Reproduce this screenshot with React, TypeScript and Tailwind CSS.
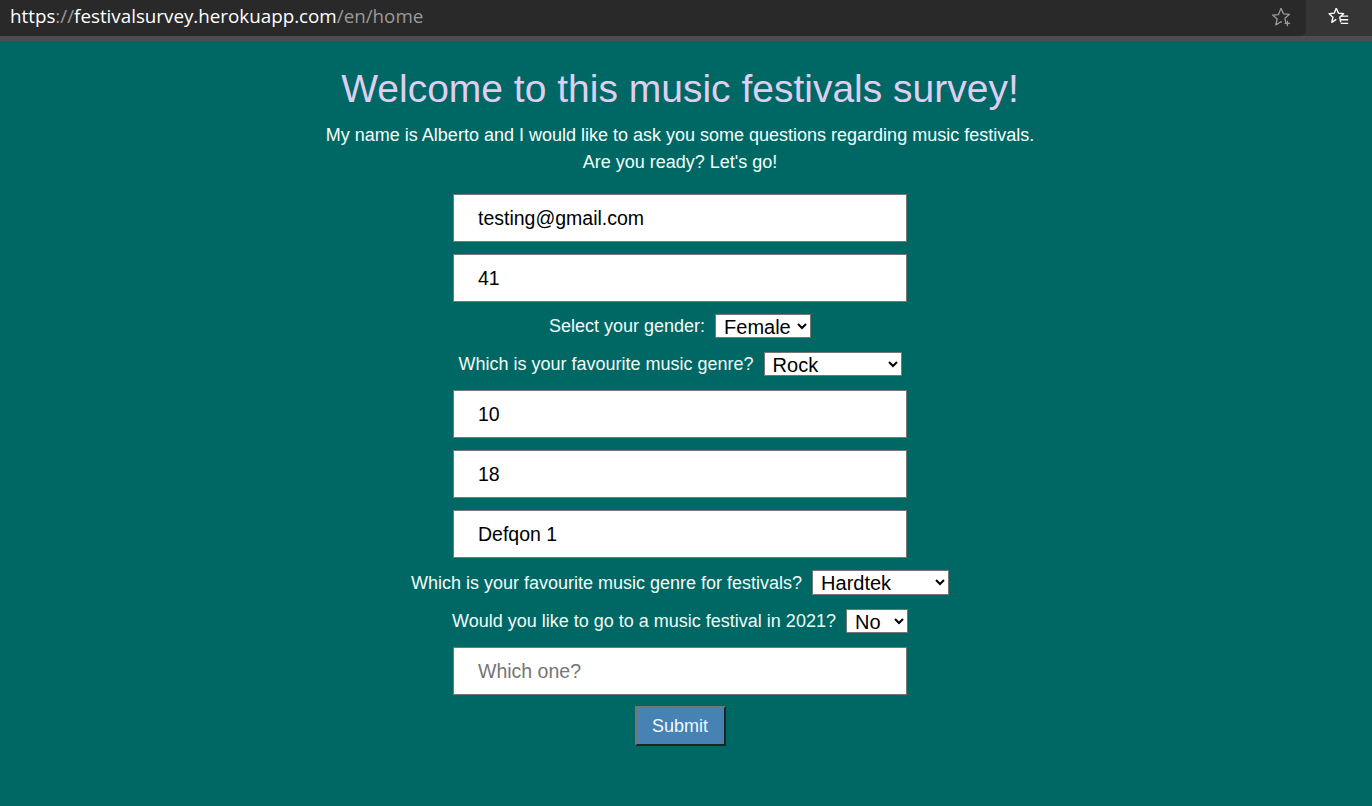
import React from "react";

const field =
  "w-[454px] h-[48px] bg-white border border-[#767676] pl-6 text-[19.5px] text-black outline-none placeholder:text-[#757575]";
const sel =
  "h-[24px] bg-white border border-[#767676] text-[20px] leading-none text-black pl-[4px] outline-none";

function BrowserBar() {
  return (
    <div className="flex h-[41px] bg-[#353535] border-b-[5px] border-[#4d4d4d]" style={{ fontFamily: '"Open Sans", "Noto Sans", sans-serif' }}>
      <div className="flex items-center flex-1 bg-[#292929] rounded-br-[6px] pl-[10px] pr-[14px]">
        <div className="flex-1 text-[18.8px] leading-none -mt-[3px]">
          <span className="text-white">https</span>
          <span className="text-[#9a9a9a]">://</span>
          <span className="text-white">festivalsurvey.herokuapp.com</span>
          <span className="text-[#9a9a9a]">/en/home</span>
        </div>
        {/* star with plus */}
        <svg width="22" height="22" viewBox="0 0 24 24" fill="none" stroke="#9a9a9a" strokeWidth="1.4" className="-mt-[3px]">
          <path d="M12 2.5l2.7 6 6.5.6-4.9 4.3 1.2 6.3" strokeLinejoin="round" />
          <path d="M13 17.8L12 17.2l-5.7 3.4 1.5-6.4L2.8 9.9l6.5-.6L12 2.5" strokeLinejoin="round" />
          <path d="M19 16v6M16 19h6" />
        </svg>
      </div>
      <div className="w-[66px] flex items-center justify-center">
        <svg width="22" height="22" viewBox="0 0 24 24" fill="none" stroke="#ffffff" strokeWidth="1.5" className="-mt-[3px]">
          <path d="M9 2.5l2.4 5.3 5.6.6-4.2 3.8 1.1 5.6" strokeLinejoin="round" />
          <path d="M9 14.6l-4.9 3.2 1.3-5.6L1.2 8.4l5.6-.6L9 2.5" strokeLinejoin="round" />
          <path d="M14 11h8M14 15h8M14 19h8" />
        </svg>
      </div>
    </div>
  );
}

function Row({ label, children }: { label: string; children: React.ReactNode }) {
  return (
    <div className="flex items-center justify-center gap-[10px]">
      <span className="text-[18px] leading-[24px] text-[#f2fbf8]">{label}</span>
      {children}
    </div>
  );
}

export default function App() {
  return (
    <div className="min-h-[806px] bg-[#006864]" style={{ fontFamily: '"Liberation Sans", Arial, sans-serif' }}>
      <BrowserBar />
      <main className="w-[1360px] flex flex-col items-center">
        <h1 className="mt-[26px] text-[39px] leading-[44px] text-[#decff0]">
          Welcome to this music festivals survey!
        </h1>
        <p className="mt-[11px] text-[18px] leading-[27px] text-[#f4fffc] text-center">
          My name is Alberto and I would like to ask you some questions regarding music festivals.
          <br />
          Are you ready? Let's go!
        </p>

        <form className="mt-[18px] flex flex-col items-center">
          <input className={field} defaultValue="testing@gmail.com" />
          <input className={`${field} mt-[12px]`} defaultValue="41" />

          <div className="mt-[12px]">
            <Row label="Select your gender:">
              <select className={`${sel} w-[96px]`} defaultValue="Female">
                <option>Male</option>
                <option>Female</option>
              </select>
            </Row>
          </div>
          <div className="mt-[14px]">
            <Row label="Which is your favourite music genre?">
              <select className={`${sel} w-[138px]`} defaultValue="Rock">
                <option>Rock</option>
                <option>Pop</option>
                <option>Techno</option>
              </select>
            </Row>
          </div>

          <input className={`${field} mt-[14px]`} defaultValue="10" />
          <input className={`${field} mt-[12px]`} defaultValue="18" />
          <input className={`${field} mt-[12px]`} defaultValue="Defqon 1" />

          <div className="mt-[12px]">
            <Row label="Which is your favourite music genre for festivals?">
              <select className={`${sel} w-[137px] h-[25px]`} defaultValue="Hardtek">
                <option>Hardtek</option>
                <option>Hardstyle</option>
                <option>Techno</option>
              </select>
            </Row>
          </div>
          <div className="mt-[14px]">
            <Row label="Would you like to go to a music festival in 2021?">
              <select className={`${sel} w-[62px]`} defaultValue="No">
                <option>Yes</option>
                <option>No</option>
              </select>
            </Row>
          </div>

          <input className={`${field} mt-[14px]`} placeholder="Which one?" />

          <button
            type="button"
            className="mt-[11px] w-[91px] h-[40px] bg-[#4682b4] text-[18px] text-[#eefaff] border-2 border-t-[#767676] border-l-[#767676] border-b-[#222] border-r-[#222]"
          >
            Submit
          </button>
        </form>
      </main>
    </div>
  );
}
